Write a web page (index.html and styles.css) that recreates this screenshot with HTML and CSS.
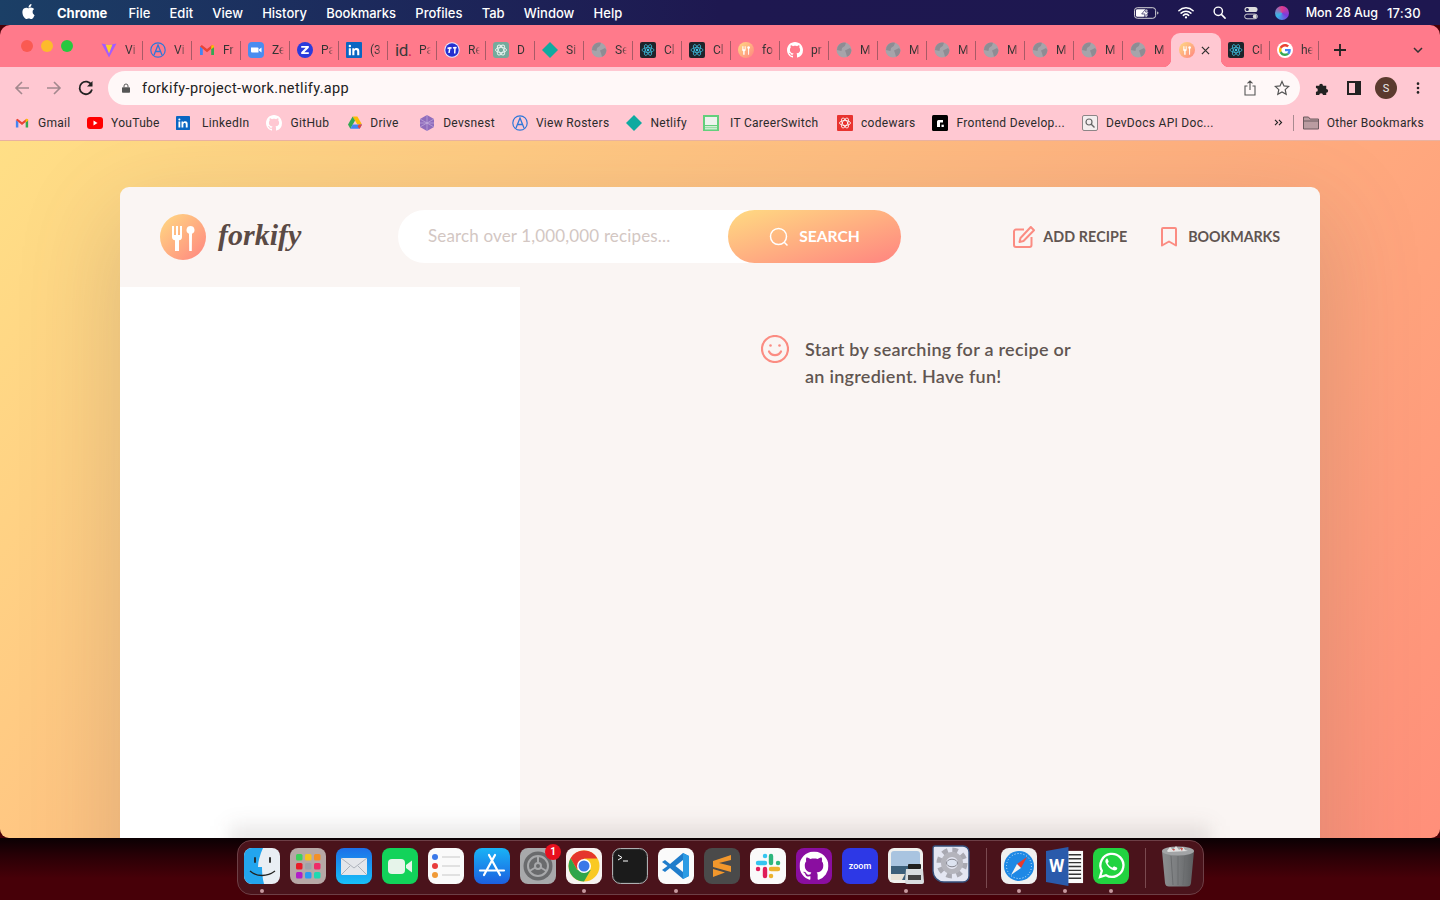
FILE: index.html
```html
<!DOCTYPE html>
<html lang="en">
<head>
    <meta charset="UTF-8">
    <meta name="viewport" content="width=device-width, initial-scale=1.0">
    <title>forkify</title>
    <link rel="stylesheet" href="styles.css">
</head>
<body>
    <!-- shared favicons -->
    <svg class="sprites" aria-hidden="true">
        <defs>
            <linearGradient id="brand" x1="0" y1="0" x2="1" y2="1">
                <stop offset="0" stop-color="#ffdb82"/>
                <stop offset="1" stop-color="#ff8480"/>
            </linearGradient>
        </defs>
        <symbol id="i-vite" viewBox="0 0 16 16">
            <path d="M0.500 1.500 8 3l7.500-1.500L8 15.500z" fill="#a45cff"/>
            <path d="M4.500 2.400 8 3l3.500-.6L8 11.500z" fill="#ffd028"/>
        </symbol>
        <symbol id="i-a" viewBox="0 0 16 16">
            <circle cx="8" cy="8" r="7.200" fill="none" stroke="#2f77d8" stroke-width="1.200"/>
            <path d="M4 13 8 3l4 10M5.600 9.500h4.800" fill="none" stroke="#2f77d8" stroke-width="1.300"/>
        </symbol>
        <symbol id="i-gmail" viewBox="0 0 16 16">
            <path d="M1 4.500V13h2.800V6.500z" fill="#4285f4"/>
            <path d="M15 4.500V13h-2.800V6.500z" fill="#34a853"/>
            <path d="M1 4.500 2.800 3 8 7l5.200-4L15 4.500 8 10.300z" fill="#ea4335"/>
            <path d="M12.200 3.800 13.500 3 15 3.800v1.500l-2.800 2z" fill="#fbbc05"/>
        </symbol>
        <symbol id="i-zoom" viewBox="0 0 16 16">
            <rect width="16" height="16" rx="4" fill="#4a8cf0"/>
            <path d="M3 5.500h6.500a1 1 0 0 1 1 1V10.500H4a1 1 0 0 1-1-1z" fill="#fff"/>
            <path d="m11 7.500 2.500-2v5l-2.500-2z" fill="#fff"/>
        </symbol>
        <symbol id="i-z" viewBox="0 0 16 16">
            <circle cx="8" cy="8" r="8" fill="#2b3bdc"/>
            <path d="M4.200 4h7.600v1.700L7.300 10.300h4.500V12H4.200v-1.700l4.500-4.600H4.200z" fill="#fff"/>
        </symbol>
        <symbol id="i-in" viewBox="0 0 16 16">
            <rect width="16" height="16" rx="1" fill="#0a66c2"/>
            <path d="M2.800 6.200h2.100v7H2.800zM3.850 2.800a1.200 1.200 0 1 1 0 2.400 1.200 1.200 0 0 1 0-2.400zM6.300 6.200h2v1c.4-.7 1.200-1.200 2.300-1.200 2 0 2.700 1.200 2.700 3.200v4h-2.100V9.700c0-1-.3-1.800-1.300-1.800s-1.500.8-1.500 1.800v3.500H6.300z" fill="#fff"/>
        </symbol>
        <symbol id="i-rt" viewBox="0 0 16 16">
            <circle cx="8" cy="8" r="7.700" fill="#e8ecff"/>
            <circle cx="8" cy="8" r="6.700" fill="#2430d0"/>
            <path d="M3.500 6.500c1.500-.8 3-.8 4.200-.4M5.800 6.200 5 11M9 6c1.200-.5 2.400-.6 3.600-.2M11 6l-.3 5.500" stroke="#fff" stroke-width="1.500" fill="none"/>
        </symbol>
        <symbol id="i-gpt" viewBox="0 0 16 16">
            <rect width="16" height="16" rx="3" fill="#74aa9c"/>
            <g fill="none" stroke="#e6f2ee" stroke-width="0.900">
                <ellipse cx="8" cy="8" rx="5.500" ry="2.600"/>
                <ellipse cx="8" cy="8" rx="5.500" ry="2.600" transform="rotate(60 8 8)"/>
                <ellipse cx="8" cy="8" rx="5.500" ry="2.600" transform="rotate(120 8 8)"/>
            </g>
        </symbol>
        <symbol id="i-netlify" viewBox="0 0 16 16">
            <path d="M8 0 16 8 8 16 0 8z" fill="#0faaa0"/>
        </symbol>
        <symbol id="i-globe" viewBox="0 0 16 16">
            <circle cx="8" cy="8" r="7.500" fill="#a6a4aa"/>
            <path d="M3 2.800A7.500 7.500 0 0 1 10 .8L8.800 4 6 6 5.500 9 1 8a7.500 7.500 0 0 1 2-5.200z" fill="#8e8c93"/>
            <path d="M9 8.500 14 6l1.400 2A7.500 7.500 0 0 1 11 14.800L10 11z" fill="#8e8c93"/>
        </symbol>
        <symbol id="i-react" viewBox="0 0 16 16">
            <rect width="16" height="16" rx="2" fill="#20232a"/>
            <g fill="none" stroke="#3fc7ea" stroke-width="0.700">
                <ellipse cx="8" cy="8" rx="6" ry="2.400"/>
                <ellipse cx="8" cy="8" rx="6" ry="2.400" transform="rotate(60 8 8)"/>
                <ellipse cx="8" cy="8" rx="6" ry="2.400" transform="rotate(120 8 8)"/>
            </g>
            <circle cx="8" cy="8" r="1.200" fill="#3fc7ea"/>
        </symbol>
        <symbol id="i-fork" viewBox="0 0 46 46">
            <circle cx="23" cy="23" r="23" fill="url(#brand)"/>
            <path d="M12 12h2v9h2v-9h2v9h2v-9h2v11c0 2-1 3-3 3.300V37h-4V26.300c-2-.3-3-1.300-3-3.300z" fill="#fff"/>
            <path d="M30.500 12a4 4 0 0 1 1.500 7.700L31.800 37h-2.600L29 19.700A4 4 0 0 1 30.500 12z" fill="#fff"/>
        </symbol>
        <symbol id="i-github" viewBox="0 0 16 16">
            <path fill="#fff" d="M8 0C3.580 0 0 3.580 0 8c0 3.540 2.290 6.530 5.470 7.590.4.070.55-.17.55-.38 0-.19-.01-.82-.01-1.490-2.010.37-2.530-.49-2.690-.94-.09-.23-.48-.94-.82-1.130-.28-.15-.68-.52-.01-.53.63-.01 1.080.58 1.230.82.72 1.210 1.870.87 2.330.66.070-.52.28-.87.51-1.070-1.780-.2-3.640-.89-3.640-3.950 0-.87.31-1.590.82-2.150-.08-.2-.36-1.020.08-2.120 0 0 .67-.21 2.200.82.64-.18 1.320-.27 2-.27.68 0 1.360.09 2 .27 1.530-1.040 2.200-.82 2.200-.82.44 1.100.16 1.920.08 2.120.51.56.82 1.270.82 2.150 0 3.070-1.870 3.750-3.650 3.950.29.25.54.73.54 1.480 0 1.070-.01 1.930-.01 2.200 0 .21.15.46.55.38A8.013 8.013 0 0 0 16 8c0-4.420-3.580-8-8-8z"/>
        </symbol>
        <symbol id="i-google" viewBox="0 0 56 56">
            <circle cx="28" cy="28" r="28" fill="#fff"/>
            <g transform="translate(7 7) scale(.875)">
                <path fill="#EA4335" d="M24 9.500c3.540 0 6.710 1.220 9.210 3.600l6.850-6.850C35.900 2.380 30.470 0 24 0 14.620 0 6.510 5.380 2.560 13.220l7.980 6.190C12.430 13.720 17.740 9.500 24 9.500z"/>
                <path fill="#4285F4" d="M46.980 24.550c0-1.570-.15-3.090-.38-4.550H24v9.020h12.940c-.58 2.960-2.260 5.480-4.780 7.180l7.730 6c4.510-4.180 7.090-10.360 7.090-17.650z"/>
                <path fill="#FBBC05" d="M10.530 28.590c-.48-1.450-.76-2.990-.76-4.590s.27-3.140.76-4.590l-7.980-6.190C.92 16.460 0 20.120 0 24c0 3.880.92 7.540 2.560 10.780l7.970-6.190z"/>
                <path fill="#34A853" d="M24 48c6.480 0 11.930-2.130 16.030-5.810l-7.730-6c-2.150 1.450-4.920 2.300-8.300 2.300-6.260 0-11.570-4.220-13.470-9.910l-7.980 6.190C6.510 42.620 14.620 48 24 48z"/>
            </g>
        </symbol>
    </svg>

    <header class="menubar">
        <div class="menu-left">
            <svg class="apple" viewBox="0 0 24 24"><path fill="#fff" d="M12.152 6.896c-.948 0-2.415-1.078-3.960-1.040-2.040.027-3.910 1.183-4.961 3.014-2.117 3.675-.546 9.103 1.519 12.090 1.013 1.454 2.208 3.090 3.792 3.039 1.520-.065 2.090-.987 3.935-.987 1.831 0 2.350.987 3.960.948 1.637-.026 2.676-1.480 3.676-2.948 1.156-1.688 1.636-3.325 1.662-3.415-.039-.013-3.182-1.221-3.220-4.857-.026-3.040 2.480-4.494 2.597-4.559-1.429-2.090-3.623-2.324-4.390-2.376-2-.156-3.675 1.090-4.610 1.090zM15.530 3.830c.843-1.012 1.400-2.427 1.245-3.830-1.207.052-2.662.805-3.532 1.818-.78.896-1.454 2.338-1.273 3.714 1.338.104 2.715-.688 3.559-1.701"/></svg>
            <span class="menu-app">Chrome</span>
            <span>File</span>
            <span>Edit</span>
            <span>View</span>
            <span>History</span>
            <span>Bookmarks</span>
            <span>Profiles</span>
            <span>Tab</span>
            <span>Window</span>
            <span>Help</span>
        </div>
        <div class="menu-right">
            <svg class="st-battery" viewBox="0 0 26 12"><rect x="0.500" y="0.500" width="22" height="11" rx="3" fill="none" stroke="#ddd"/><rect x="2" y="2" width="12" height="8" rx="1.500" fill="#fff"/><path d="M13 1 8 7h3.500l-1 4 5-6H12z" fill="#fff" stroke="#1e1a52" stroke-width="0.700"/><path d="M24 4.500c1 .3 1.500.8 1.500 1.500s-.5 1.200-1.500 1.500z" fill="#bbb"/></svg>
            <svg class="st-wifi" viewBox="0 0 18 14"><path d="M1 5a11.500 11.500 0 0 1 16 0M3.500 7.700a8 8 0 0 1 11 0M6 10.200a4.400 4.400 0 0 1 6 0" fill="none" stroke="#fff" stroke-width="1.700" stroke-linecap="round"/><circle cx="9" cy="12.500" r="1.300" fill="#fff"/></svg>
            <svg class="st-search" viewBox="0 0 14 14"><circle cx="5.700" cy="5.700" r="4.500" fill="none" stroke="#fff" stroke-width="1.500"/><path d="m9 9 4 4" stroke="#fff" stroke-width="1.700" stroke-linecap="round"/></svg>
            <svg class="st-control" viewBox="0 0 15 14"><rect x="0.500" y="0.500" width="14" height="5.500" rx="2.750" fill="#ddd"/><circle cx="3.500" cy="3.250" r="1.700" fill="#1e1a52"/><rect x="0.700" y="8.200" width="13.600" height="5" rx="2.500" fill="none" stroke="#ddd"/><circle cx="11.500" cy="10.700" r="2" fill="#ddd"/></svg>
            <span class="st-siri"></span>
            <span class="st-date">Mon 28 Aug</span>
            <span class="st-time">17:30</span>
        </div>
    </header>

    <div class="window">
        <div class="tabstrip">
            <div class="lights"><i class="red"></i><i class="yellow"></i><i class="green"></i></div>
            <div class="tab"><svg><use href="#i-vite"/></svg><span>Vi</span></div>
            <div class="tab"><svg><use href="#i-a"/></svg><span>Vi</span></div>
            <div class="tab"><svg><use href="#i-gmail"/></svg><span>Fr</span></div>
            <div class="tab"><svg><use href="#i-zoom"/></svg><span>Ze</span></div>
            <div class="tab"><svg><use href="#i-z"/></svg><span>Pa</span></div>
            <div class="tab"><svg><use href="#i-in"/></svg><span>(3</span></div>
            <div class="tab"><b class="tab-id">id<em>.</em></b><span>Pa</span></div>
            <div class="tab"><svg><use href="#i-rt"/></svg><span>Re</span></div>
            <div class="tab"><svg><use href="#i-gpt"/></svg><span>D</span></div>
            <div class="tab"><svg><use href="#i-netlify"/></svg><span>Si</span></div>
            <div class="tab"><svg><use href="#i-globe"/></svg><span>Se</span></div>
            <div class="tab"><svg><use href="#i-react"/></svg><span>Cl</span></div>
            <div class="tab"><svg><use href="#i-react"/></svg><span>Cl</span></div>
            <div class="tab"><svg><use href="#i-fork"/></svg><span>fo</span></div>
            <div class="tab"><svg><use href="#i-github"/></svg><span>pr</span></div>
            <div class="tab"><svg><use href="#i-globe"/></svg><span>M</span></div>
            <div class="tab"><svg><use href="#i-globe"/></svg><span>M</span></div>
            <div class="tab"><svg><use href="#i-globe"/></svg><span>M</span></div>
            <div class="tab"><svg><use href="#i-globe"/></svg><span>M</span></div>
            <div class="tab"><svg><use href="#i-globe"/></svg><span>M</span></div>
            <div class="tab"><svg><use href="#i-globe"/></svg><span>M</span></div>
            <div class="tab tab-before-active"><svg><use href="#i-globe"/></svg><span>M</span></div>
            <div class="tab tab-active"><svg><use href="#i-fork"/></svg><svg class="tab-close" viewBox="0 0 10 10"><path d="m1 1 8 8M9 1 1 9" stroke="#333" stroke-width="1.400"/></svg></div>
            <div class="tab"><svg><use href="#i-react"/></svg><span>Cl</span></div>
            <div class="tab"><svg><use href="#i-google"/></svg><span>he</span></div>
            <svg class="tab-new" viewBox="0 0 12 12"><path d="M6 0v12M0 6h12" stroke="#222" stroke-width="1.800"/></svg>
            <svg class="tab-list" viewBox="0 0 10 6"><path d="m1 1 4 4 4-4" fill="none" stroke="#333" stroke-width="1.500"/></svg>
        </div>

        <div class="toolbar">
            <svg class="tool" viewBox="0 0 16 16"><path d="M15 8H2M8 2 2 8l6 6" fill="none" stroke="#a3888e" stroke-width="1.600"/></svg>
            <svg class="tool" viewBox="0 0 16 16"><path d="M1 8h13M8 2l6 6-6 6" fill="none" stroke="#a3888e" stroke-width="1.600"/></svg>
            <svg class="tool" viewBox="0 0 16 16"><path d="M13.500 5A6.300 6.300 0 1 0 14 9.500" fill="none" stroke="#222" stroke-width="1.800"/><path d="M14.500 1v5.500H9z" fill="#222"/></svg>
            <div class="omnibox">
                <svg class="lock" viewBox="0 0 10 12"><path d="M2.500 5V3.500a2.500 2.500 0 0 1 5 0V5" fill="none" stroke="#555" stroke-width="1.200"/><rect y="5" width="10" height="7" rx="1" fill="#555"/></svg>
                <span class="url">forkify-project-work.netlify.app</span>
                <svg class="omni-share" viewBox="0 0 12 16"><path d="M3.500 6H1v9h10V6H8.500M6 10V1M3.500 3.300 6 1l2.500 2.300" fill="none" stroke="#555" stroke-width="1.100"/></svg>
                <svg class="omni-star" viewBox="0 0 16 16"><path d="m8 1.500 2 4.400 4.700.5-3.500 3.200 1 4.700L8 11.900l-4.200 2.400 1-4.700L1.300 6.400 6 5.900z" fill="none" stroke="#555" stroke-width="1.200"/></svg>
            </div>
            <svg class="tool-puzzle" viewBox="0 0 16 16"><path d="M1 5h3.500a2 2 0 1 1 4 0H12v3.500a2 2 0 1 1 0 4V15H8.500a2 2 0 1 0-4 0H1v-3.500a2 2 0 1 0 0-4z" fill="#222"/></svg>
            <svg class="tool-panel" viewBox="0 0 14 14"><rect x="1" y="1" width="12" height="12" fill="none" stroke="#222" stroke-width="2"/><rect x="8" y="1" width="5" height="12" fill="#222"/></svg>
            <span class="avatar">S</span>
            <svg class="tool-more" viewBox="0 0 4 16"><circle cx="2" cy="3" r="1.500" fill="#222"/><circle cx="2" cy="8" r="1.500" fill="#222"/><circle cx="2" cy="13" r="1.500" fill="#222"/></svg>
        </div>

        <nav class="bookmarks">
            <a class="bm bm-gmail"><svg><use href="#i-gmail"/></svg>Gmail</a>
            <a class="bm bm-yt"><svg viewBox="0 0 16 12"><rect width="16" height="12" rx="3" fill="#f00"/><path d="m6.500 3.500 4 2.500-4 2.500z" fill="#fff"/></svg>YouTube</a>
            <a class="bm bm-in"><svg><use href="#i-in"/></svg>LinkedIn</a>
            <a class="bm bm-gh"><svg><use href="#i-github"/></svg>GitHub</a>
            <a class="bm bm-drive"><svg viewBox="0 0 16 14"><path d="M5.300 0h5.400l5.300 9.300h-5.300z" fill="#fbbc05"/><path d="M5.300 0 0 9.300 2.700 14l5.300-9.300z" fill="#34a853"/><path d="M2.700 14h10.600L16 9.300H5.300z" fill="#4285f4"/><path d="m13.300 14 2.700-4.700h-3.500l-1.500 2.500z" fill="#ea4335"/></svg>Drive</a>
            <a class="bm bm-dev"><svg viewBox="0 0 14 16"><path d="m7 0 7 4v8l-7 4-7-4V4z" fill="#8f6cbc"/><path d="M7 0v16M0 4l7 4 7-4M0 8h14M0 12l7-4 7 4" stroke="#c9b5e0" stroke-width="0.600" fill="none"/></svg>Devsnest</a>
            <a class="bm bm-rost"><svg><use href="#i-a"/></svg>View Rosters</a>
            <a class="bm bm-net"><svg><use href="#i-netlify"/></svg>Netlify</a>
            <a class="bm bm-it"><svg viewBox="0 0 16 16"><rect width="16" height="16" fill="#63cf7c"/><rect x="2" y="2" width="12" height="8" fill="#eef3ee"/><rect x="2" y="11" width="12" height="1.500" fill="#d6eed8"/><rect x="2" y="13.200" width="12" height="1.200" fill="#e6f6e8"/></svg>IT CareerSwitch</a>
            <a class="bm bm-cw"><svg viewBox="0 0 16 16"><rect width="16" height="16" rx="1" fill="#e8332f"/><g fill="none" stroke="#fff" stroke-width="0.800"><ellipse cx="8" cy="8" rx="5.500" ry="2.500"/><ellipse cx="8" cy="8" rx="5.500" ry="2.500" transform="rotate(60 8 8)"/><ellipse cx="8" cy="8" rx="5.500" ry="2.500" transform="rotate(120 8 8)"/></g></svg>codewars</a>
            <a class="bm bm-fe"><svg viewBox="0 0 16 16"><rect width="16" height="16" rx="1.500" fill="#000"/><path d="M5 12V6.500A1.500 1.500 0 0 1 6.500 5H11v2.500H8V12z" fill="#fff"/><rect x="9.500" y="9.700" width="2.300" height="2.300" fill="#fff"/></svg>Frontend Develop...</a>
            <a class="bm bm-docs"><svg viewBox="0 0 16 16"><rect x="0.500" y="0.500" width="15" height="15" rx="1.500" fill="#f4eeee" stroke="#8d8587"/><circle cx="7" cy="7" r="3" fill="none" stroke="#666" stroke-width="1.200"/><path d="m9 9 3.500 3.500" stroke="#666" stroke-width="1.400"/></svg>DevDocs API Doc...</a>
            <svg class="bm-more" viewBox="0 0 10 8"><path d="m1 1 3 3-3 3M5.500 1l3 3-3 3" fill="none" stroke="#222" stroke-width="1.300"/></svg>
            <span class="bm-sep"></span>
            <a class="bm bm-other"><svg viewBox="0 0 16 13"><path d="M.5 12.500V.5h5l1.500 2h8.500v10z" fill="#bb9ca1" stroke="#6d5a5e"/><path d="M.5 4.500h15" stroke="#6d5a5e"/></svg>Other Bookmarks</a>
        </nav>

        <main class="page">
            <div class="container">
                <div class="header">
                    <div class="logo">
                        <svg><use href="#i-fork"/></svg>
                        <span>forkify</span>
                    </div>
                    <form class="search">
                        <input class="search-field" type="text" placeholder="Search over 1,000,000 recipes...">
                        <button class="btn" type="button">
                            <svg viewBox="0 0 20 20"><circle cx="9.500" cy="9.500" r="8" fill="none" stroke="#fff" stroke-width="1.500"/><path d="m15 15 3.500 3.500" stroke="#fff" stroke-width="1.500"/></svg>
                            <span>Search</span>
                        </button>
                    </form>
                    <div class="nav">
                        <a class="nav-btn nav-add">
                            <svg viewBox="0 0 22 22"><path d="M11 3.500H3a2 2 0 0 0-2 2V19a2 2 0 0 0 2 2h13.500a2 2 0 0 0 2-2v-8" fill="none" stroke="#fb8c82" stroke-width="2"/><path d="M17.800 1 21 4.200 10.500 15l-4 1 1-4z" fill="none" stroke="#fb8c82" stroke-width="2" stroke-linejoin="round"/></svg>
                            <span>Add recipe</span>
                        </a>
                        <a class="nav-btn nav-marks">
                            <svg viewBox="0 0 16 20"><path d="M2 1h12a1 1 0 0 1 1 1v16.500l-7-4-7 4V2a1 1 0 0 1 1-1z" fill="none" stroke="#fb8c82" stroke-width="2" stroke-linejoin="round"/></svg>
                            <span>Bookmarks</span>
                        </a>
                    </div>
                </div>
                <div class="results"></div>
                <div class="recipe">
                    <div class="message">
                        <svg viewBox="0 0 28 28"><circle cx="14" cy="14" r="13" fill="none" stroke="#fb8c82" stroke-width="2.200"/><circle cx="9.500" cy="10.500" r="1.300" fill="#fb8c82"/><circle cx="18.500" cy="10.500" r="1.300" fill="#fb8c82"/><path d="M8 16.500c1.200 2.400 3.300 3.600 6 3.600s4.800-1.200 6-3.600" fill="none" stroke="#fb8c82" stroke-width="2.200" stroke-linecap="round"/></svg>
                        <p>Start by searching for a recipe or an ingredient. Have fun!</p>
                    </div>
                </div>
            </div>
            <div class="dock-glow"></div>
        </main>
    </div>

    <footer class="dock-area">
        <div class="dock">
            <div class="app"><svg viewBox="0 0 36 36"><rect width="36" height="36" rx="8" fill="#e9eef4"/><path d="M8 0h11c-3 7-5 13-5 19h4c0 6 .5 11 2 17H8a8 8 0 0 1-8-8V8a8 8 0 0 1 8-8z" fill="#23a5ee"/><path d="M11 10v4M26 10v4" stroke="#222" stroke-width="1.800" stroke-linecap="round"/><path d="M6 23c7 6 17 6 25 0" fill="none" stroke="#222" stroke-width="1.300"/></svg><i class="dot"></i></div>
            <div class="app"><svg viewBox="0 0 36 36"><rect width="36" height="36" rx="8" fill="#b7a8a6"/><g><rect x="6" y="6" width="6.500" height="6.500" rx="1.500" fill="#3ed15c"/><rect x="15" y="6" width="6.500" height="6.500" rx="1.500" fill="#f6c420"/><rect x="24" y="6" width="6.500" height="6.500" rx="1.500" fill="#f39028"/><rect x="6" y="15" width="6.500" height="6.500" rx="1.500" fill="#e81c28"/><rect x="15" y="15" width="6.500" height="6.500" rx="1.500" fill="#9ea3a8"/><rect x="24" y="15" width="6.500" height="6.500" rx="1.500" fill="#ee2a68"/><rect x="6" y="24" width="6.500" height="6.500" rx="1.500" fill="#b01fc8"/><rect x="15" y="24" width="6.500" height="6.500" rx="1.500" fill="#2a9df0"/><rect x="24" y="24" width="6.500" height="6.500" rx="1.500" fill="#1ed8b0"/></g></svg></div>
            <div class="app"><svg viewBox="0 0 36 36"><defs><linearGradient id="mail" x1="0" y1="0" x2="0" y2="1"><stop offset="0" stop-color="#1d6fe8"/><stop offset="1" stop-color="#17c0f8"/></linearGradient></defs><rect width="36" height="36" rx="8" fill="url(#mail)"/><rect x="5" y="10" width="26" height="17" rx="1" fill="#e4e6ea"/><path d="m5 10 13 10 13-10M5 27l9-9M31 27l-9-9" fill="none" stroke="#a7adb6" stroke-width="0.900"/></svg></div>
            <div class="app"><svg viewBox="0 0 36 36"><rect width="36" height="36" rx="8" fill="#12d35a"/><rect x="6" y="11" width="17" height="15" rx="4" fill="#e6f4ea"/><path d="m24 17 6-4.500v12L24 20z" fill="#e6f4ea"/></svg></div>
            <div class="app"><svg viewBox="0 0 36 36"><rect width="36" height="36" rx="8" fill="#fafafa"/><circle cx="7" cy="9" r="3" fill="#3a78e8"/><circle cx="7" cy="18" r="3" fill="#e83c3c"/><circle cx="7" cy="27" r="3" fill="#f09a38"/><path d="M14 9h18M14 18h18M14 27h18" stroke="#c8c8c8" stroke-width="1.200"/></svg></div>
            <div class="app"><svg viewBox="0 0 36 36"><defs><linearGradient id="store" x1="0" y1="0" x2="0" y2="1"><stop offset="0" stop-color="#19b3f6"/><stop offset="1" stop-color="#1c5fe0"/></linearGradient></defs><rect width="36" height="36" rx="8" fill="url(#store)"/><path d="M15 7l11 20M21 7 10 27M6 22.500h24" fill="none" stroke="#fff" stroke-width="2.200" stroke-linecap="round"/></svg></div>
            <div class="app"><svg viewBox="0 0 36 36"><rect width="36" height="36" rx="8" fill="#a8a9ab"/><circle cx="18" cy="18" r="14.500" fill="#6a6b6d"/><circle cx="18" cy="18" r="10" fill="none" stroke="#a8a9ab" stroke-width="2"/><circle cx="18" cy="18" r="3" fill="none" stroke="#a8a9ab" stroke-width="2"/><path d="M18 15V8M15.400 19.500 9.500 23M20.600 19.500l5.900 3.500" stroke="#a8a9ab" stroke-width="2"/></svg><b class="badge">1</b></div>
            <div class="app"><svg viewBox="0 0 36 36"><rect width="36" height="36" rx="8" fill="#f7f3f1"/><circle cx="18" cy="18" r="15.500" fill="#f9c922"/><path d="M18 2.500A15.500 15.500 0 0 0 4.600 10.300l6.600 11.400L18 10.500h13.400A15.500 15.500 0 0 0 18 2.500z" fill="#e5352c"/><path d="M4.600 10.300A15.500 15.500 0 0 0 18 33.500l6.700-11.500h-13.500z" fill="#2fa54a"/><circle cx="18" cy="18" r="7" fill="#fff"/><circle cx="18" cy="18" r="5.500" fill="#3a78e8"/></svg><i class="dot"></i></div>
            <div class="app"><svg viewBox="0 0 36 36"><rect x="0.500" y="0.500" width="35" height="35" rx="8" fill="#2c2c2c" stroke="#aeb0b2"/><rect x="2" y="2" width="32" height="32" rx="6" fill="#1b1b1b"/><path d="m6 7 4 2.500L6 12" fill="none" stroke="#fff" stroke-width="1"/><path d="M11 13h5" stroke="#fff" stroke-width="1"/></svg></div>
            <div class="app"><svg viewBox="0 0 36 36"><rect width="36" height="36" rx="8" fill="#fafafa"/><path d="M25 5 31 8v20l-6 3-13-11-5 4-3-2 5.500-4L4 14l3-2 5 4z" fill="#1f7ccb"/><path d="M25 5 31 8v20l-6 3z" fill="#2b9be4"/><path d="M25 12v12l-7.500-6z" fill="#fafafa"/></svg><i class="dot"></i></div>
            <div class="app"><svg viewBox="0 0 36 36"><rect width="36" height="36" rx="8" fill="#4a4a4a"/><path d="M27 7 9 13v6l18 5v-6L15 15l12-3zM9 21l12 3.500L9 29z" fill="#f2972c"/></svg></div>
            <div class="app"><svg viewBox="0 0 36 36"><rect width="36" height="36" rx="8" fill="#fafafa"/><g stroke-width="4.400" stroke-linecap="round"><path d="M8 15h7M15 8h.1" stroke="#36c5f0"/><path d="M21 8v7M28 15h.1" stroke="#2eb67d"/><path d="M21 21h7M21 28h.1" stroke="#ecb22e"/><path d="M15 21v7M8 21h.1" stroke="#e01e5a"/></g></svg></div>
            <div class="app"><svg viewBox="0 0 36 36"><rect width="36" height="36" rx="8" fill="#8a0ea0"/><use href="#i-github" x="3.500" y="3.500" width="29" height="29"/></svg></div>
            <div class="app"><svg viewBox="0 0 36 36"><rect width="36" height="36" rx="8" fill="#2d38e6"/><text x="18" y="20.500" text-anchor="middle" class="zoom-word">zoom</text></svg></div>
            <div class="app"><svg viewBox="0 0 36 36"><rect width="35" height="35" rx="6" fill="#f0f0ee"/><rect x="3" y="3" width="29" height="29" rx="3" fill="#a9c4e0"/><rect x="3" y="18" width="29" height="14" fill="#3c5f7a"/><path d="M3 26h14l-3 6H3z" fill="#e8e2d8"/><rect x="20" y="16" width="13" height="5" rx="1" fill="#1f1f1f"/><path d="M18 21h17l1 13a2 2 0 0 1-2 2H19a2 2 0 0 1-2-2z" fill="#d8dde0"/><path d="M20 27h13v5H20z" fill="#444"/></svg><i class="dot"></i></div>
            <div class="app app-prefs"><svg viewBox="0 0 40 40"><path d="M3 1h28a6 6 0 0 1 6 6v24a6 6 0 0 1-6 6H12C6 37 1 32 1 26V3a2 2 0 0 1 2-2z" fill="#e4e6f2" stroke="#35507c" stroke-width="1.400"/><circle cx="20" cy="18" r="13" fill="none" stroke="#a9a9b2" stroke-width="5" stroke-dasharray="5.500 4.700"/><circle cx="20" cy="18" r="8.500" fill="none" stroke="#b4b4bc" stroke-width="5"/><ellipse cx="20" cy="18" rx="5.500" ry="3.800" fill="#dde3f0" stroke="#85858e"/></svg></div>
            <span class="dock-sep"></span>
            <div class="app"><svg viewBox="0 0 36 36"><rect width="36" height="36" rx="8" fill="#f0f0f0"/><circle cx="18" cy="18" r="15" fill="#1e88e5"/><circle cx="18" cy="18" r="12.500" fill="none" stroke="#d6eafa" stroke-width="1" stroke-dasharray="1 2"/><path d="M26 9 16 16l4 4z" fill="#e8392c"/><path d="M10 27l6-11 4 4z" fill="#f4f4f4"/></svg><i class="dot"></i></div>
            <div class="app app-word"><svg viewBox="0 0 40 40"><rect x="20" y="4" width="18" height="33" fill="#fafafa"/><path d="M23 8h13M23 12h13M23 16h13M23 20h13M23 24h13M23 28h13M23 32h13" stroke="#333" stroke-width="1.400"/><path d="M0 4 23 0v40L0 36z" fill="#2a5aab"/><text x="11" y="26" text-anchor="middle" class="word-w">W</text></svg><i class="dot"></i></div>
            <div class="app"><svg viewBox="0 0 36 36"><rect width="36" height="36" rx="8" fill="#22d340"/><path d="M7 29l1.800-6.200A11.500 11.500 0 1 1 13 27.200z" fill="none" stroke="#fff" stroke-width="2.300"/><path d="M13.500 11c-1 .6-1.500 2-.8 3.800 1.500 3.700 4.500 6.500 8 7.500 1.700.4 3-.3 3.500-1.500.2-.6.100-1-.3-1.200l-2.500-1.200c-.4-.2-.7 0-1 .4l-.8 1c-2.200-.8-4-2.500-5-4.600l.8-.9c.3-.3.300-.7.200-1l-1-2.400c-.3-.6-.6-.6-1.100-.4z" fill="#fff"/></svg><i class="dot"></i></div>
            <span class="dock-sep"></span>
            <div class="app app-trash"><svg viewBox="0 0 36 42"><defs><linearGradient id="bin" x1="0" y1="0" x2="1" y2="0"><stop offset="0" stop-color="#8c8e90"/><stop offset=".5" stop-color="#7a7c7e"/><stop offset="1" stop-color="#5c5e60"/></linearGradient></defs><path d="M2 6h32l-3 32a4 4 0 0 1-4 3.500H9A4 4 0 0 1 5 38z" fill="url(#bin)"/><path d="M11 11l2 29M18 11v29M25 11l-2 29" stroke="#6a6c6e" stroke-width="1"/><ellipse cx="18" cy="6" rx="16" ry="4.500" fill="#a2a4a6"/><path d="M7 6l3-4 3 3 3-4 3 4 4-3 2 3 3 1-20 1z" fill="#e2e2e2"/><path d="M12 4h3l-1 2zM20 3h3l-1 3z" fill="#c8544e"/></svg></div>
        </div>
    </footer>
</body>
</html>
```

FILE: styles.css
```css
* {
    box-sizing: border-box;
}
html, body {
    height: 100%;
    margin: 0;
    overflow: hidden;
}
body {
    display: flex;
    flex-direction: column;
    background: #470008;
    font-family: Roboto, Arial, sans-serif;
}
.sprites {
    position: absolute;
    width: 0;
    height: 0;
}

/* mac menu bar */
.menubar {
    height: 25px;
    flex: none;
    display: flex;
    justify-content: space-between;
    align-items: center;
    padding: 0 18px 0 21px;
    background: linear-gradient(90deg, #1b3f66 0%, #1c2a5c 25%, #1e1850 50%, #1e1750 100%);
    color: #fff;
    font-family: Inter, Arial, sans-serif;
    font-size: 13px;
    font-weight: 500;
}
.menu-left {
    display: flex;
    align-items: center;
    gap: 19.2px;
}
.apple {
    width: 15px;
    height: 15px;
    margin: -3px 1.8px 0 0;
}
.menu-app {
    font-weight: 700;
    margin-right: 2px;
}
.menu-right {
    display: flex;
    align-items: center;
}
.st-battery { width: 25px; height: 12px; margin-right: 19px; }
.st-wifi { width: 16px; height: 13px; margin-right: 19px; }
.st-search { width: 13px; height: 13px; margin-right: 18px; }
.st-control { width: 14px; height: 14px; margin-right: 17px; }
.st-siri {
    width: 14px;
    height: 14px;
    border-radius: 50%;
    margin-right: 17px;
    background: conic-gradient(#e23a8c, #7a3be0, #36b8e8, #e23a8c);
}
.st-date {
    margin-right: 9px;
    font-size: 12.5px;
    letter-spacing: -0.05px;
}
.st-time {
    width: 35px;
    font-size: 13px;
    letter-spacing: 0.2px;
}

/* browser window */
.window {
    flex: 1;
    min-height: 0;
    display: flex;
    flex-direction: column;
    overflow: hidden;
    border-radius: 10px 10px 9px 9px;
}
.tabstrip {
    height: 42px;
    flex: none;
    display: flex;
    align-items: flex-end;
    background: #ff7a8b;
}
.lights {
    width: 94px;
    flex: none;
    align-self: flex-start;
    display: flex;
    gap: 8px;
    padding: 15px 0 0 21px;
}
.lights i {
    width: 12px;
    height: 12px;
    border-radius: 50%;
}
.red { background: #fa5a52; }
.yellow { background: #fdbb2c; }
.green { background: #27c83f; }
.tab {
    width: 49px;
    height: 34px;
    flex: none;
    display: flex;
    align-items: center;
    gap: 8px;
    padding: 0 0 0 7px;
    font-size: 12px;
    position: relative;
}
/* thin divider between tabs */
.tab::after {
    content: "";
    position: absolute;
    right: 0;
    top: 8px;
    width: 1px;
    height: 19px;
    background: #a85a66;
}
.tab svg {
    width: 16px;
    height: 16px;
    flex: none;
}
/* title fades out at the end of a squeezed tab */
.tab span {
    width: 12px;
    white-space: nowrap;
    color: transparent;
    background: linear-gradient(90deg, #333 60%, transparent);
    -webkit-background-clip: text;
    background-clip: text;
}
.tab-id {
    width: 16px;
    flex: none;
    font-size: 17px;
    font-weight: 400;
    letter-spacing: -0.5px;
    color: #3a3a3a;
}
.tab-id em {
    color: #e0204c;
    font-style: normal;
}
.tab-before-active::after {
    display: none;
}
.tab-active {
    width: 50px;
    margin-left: -1px;
    padding-left: 8px;
    background: #ffc8d2;
    border-radius: 9px 9px 0 0;
}
/* flared bottom corners of the open tab */
.tab-active::before,
.tab-active::after {
    content: "";
    position: absolute;
    top: auto;
    bottom: 0;
    width: 8px;
    height: 8px;
}
.tab-active::before {
    left: -8px;
    background: radial-gradient(circle at 0 0, transparent 8px, #ffc8d2 8.5px);
}
.tab-active::after {
    right: -8px;
    background: radial-gradient(circle at 100% 0, transparent 8px, #ffc8d2 8.5px);
}
.tab .tab-close {
    width: 9px;
    height: 9px;
    margin-left: -2px;
}
.tab-new {
    width: 12px;
    height: 12px;
    margin: 0 0 11px 15px;
}
.tab-list {
    width: 10px;
    height: 6px;
    margin: 0 0 14px 67px;
}
.toolbar {
    height: 38px;
    flex: none;
    display: flex;
    align-items: center;
    padding: 4px 15px 0 14px;
    background: #ffc8d2;
}
.tool {
    width: 16px;
    height: 16px;
    margin-right: 16px;
}
.omnibox {
    width: 1192px;
    height: 34px;
    margin-left: -2px;
    display: flex;
    align-items: center;
    padding: 0 10px 0 14px;
    border-radius: 17px;
    background: #fff8f8;
}
.lock {
    width: 8px;
    height: 10px;
    flex: none;
}
.url {
    flex: 1;
    margin-left: 12px;
    font-size: 14.5px;
    letter-spacing: 0.36px;
    color: #222;
}
.omni-share {
    width: 12px;
    height: 16px;
    margin-right: 18px;
}
.omni-star {
    width: 16px;
    height: 16px;
}
.tool-puzzle {
    width: 15px;
    height: 15px;
    margin-left: 15px;
}
.tool-panel {
    width: 14px;
    height: 14px;
    margin-left: 17px;
}
.avatar {
    width: 22px;
    height: 22px;
    margin-left: 14px;
    border-radius: 50%;
    background: #5b3a2e;
    color: #eee;
    font-size: 11px;
    display: flex;
    align-items: center;
    justify-content: center;
}
.tool-more {
    width: 4px;
    height: 14px;
    margin-left: 19px;
}
.bookmarks {
    height: 36px;
    flex: none;
    display: flex;
    align-items: center;
    padding: 0 0 0 15px;
    background: #ffc8d2;
    border-bottom: 1px solid #e9b1a0;
    font-size: 12px;
    letter-spacing: 0.3px;
    color: #2b2b2b;
}
.bm {
    display: flex;
    align-items: center;
    gap: 8px;
    white-space: nowrap;
}
.bm svg {
    width: 16px;
    height: 16px;
    flex: none;
}
.bm-gmail { gap: 9px; margin-right: 16.5px; }
.bm-gmail svg { width: 14px; }
.bm-yt { margin-right: 16.3px; }
.bm-yt svg { height: 12px; }
.bm-in { gap: 12px; margin-right: 17px; }
.bm-in svg { width: 14px; height: 14px; }
.bm-gh { margin-right: 19px; }
.bm-drive { gap: 8px; margin-right: 21.5px; }
.bm-drive svg { width: 14px; height: 13px; }
.bm-dev { gap: 9px; margin-right: 17px; }
.bm-dev svg { width: 14px; }
.bm-rost { margin-right: 17px; }
.bm-net { margin-right: 16px; }
.bm-it { gap: 11px; margin-right: 18.5px; }
.bm-cw { margin-right: 17px; }
.bm-fe { margin-right: 17px; }
.bm-more {
    width: 9px;
    height: 7px;
    margin-left: 60px;
}
.bm-sep {
    width: 1px;
    height: 16px;
    margin: 0 9px 0 10px;
    background: #a88a90;
}

/* forkify app */
.page {
    flex: 1;
    min-height: 0;
    padding: 46px 120px 0;
    background: linear-gradient(131deg, #ffdf86, #ff8f7a);
    position: relative;
    overflow: hidden;
}
.container {
    height: 800px;
    display: grid;
    grid-template-columns: 400px 1fr;
    grid-template-rows: 100px 1fr;
    border-radius: 9px;
    overflow: hidden;
    background: #faf5f3;
    box-shadow: 0 32px 96px 8px rgba(97, 85, 81, 0.2);
    font-family: Lato, "Open Sans", Arial, sans-serif;
    color: #615551;
}
.header {
    grid-column: 1 / -1;
    display: flex;
    align-items: center;
    padding: 0 40px 1px;
}
.logo {
    width: 238px;
    flex: none;
    display: flex;
    align-items: center;
    gap: 12px;
    margin-top: 1px;
}
.logo svg {
    width: 46px;
    height: 46px;
}
.logo span {
    font-family: "Liberation Serif", serif;
    font-style: italic;
    font-weight: 700;
    font-size: 30px;
    color: #5a4a45;
    margin-top: -4px;
}
.search {
    width: 503px;
    height: 53px;
    display: flex;
    border-radius: 27px;
    background: #fff;
}
.search-field {
    flex: 1;
    min-width: 0;
    border: 0;
    outline: 0;
    padding: 0 0 2px 30px;
    background: none;
    font-family: inherit;
    font-size: 17px;
    letter-spacing: 0.15px;
}
.search-field::placeholder {
    color: #d3c7c3;
}
.btn {
    width: 173px;
    height: 53px;
    display: flex;
    align-items: center;
    justify-content: center;
    gap: 10px;
    padding: 0 0 2px;
    border: 0;
    border-radius: 27px;
    background: linear-gradient(to right bottom, #ffdb82, #ff8480);
    color: #fff;
    font-family: inherit;
    font-size: 15.6px;
    font-weight: 700;
    text-transform: uppercase;
}
.btn svg {
    width: 20px;
    height: 20px;
    margin-top: 2px;
}
.nav {
    flex: 1;
    display: flex;
    justify-content: flex-end;
    gap: 34px;
}
.nav-btn {
    display: flex;
    align-items: center;
    gap: 8px;
    font-size: 14.3px;
    font-weight: 700;
    text-transform: uppercase;
}
.nav-add span {
    letter-spacing: 0.1px;
}
.nav-add svg {
    width: 22px;
    height: 22px;
}
.nav-marks {
    gap: 11px;
}
.nav-marks span {
    letter-spacing: -0.1px;
}
.nav-marks svg {
    width: 16px;
    height: 20px;
}
.results {
    background: #fff;
}
.message {
    width: 400px;
    margin: 0 auto;
    padding: 48px 40px 0 41px;
    display: flex;
    gap: 16px;
    align-items: flex-start;
}
.message svg {
    width: 28px;
    height: 28px;
    flex: none;
}
.message p {
    margin: 1px 0 0;
    font-size: 18px;
    font-weight: 600;
    letter-spacing: 0.27px;
    line-height: 27px;
}
.dock-glow {
    position: absolute;
    left: 230px;
    right: 230px;
    bottom: -12px;
    height: 24px;
    background: rgba(60, 40, 40, 0.12);
    filter: blur(10px);
}

/* mac dock */
.dock-area {
    height: 62px;
    flex: none;
    display: flex;
    justify-content: center;
    padding-top: 2px;
    background: linear-gradient(180deg, #0a0003 0%, #2a0006 30%, #470008 65%);
}
.dock {
    width: 967px;
    height: 55px;
    margin-left: 1px;
    display: flex;
    align-items: flex-start;
    gap: 10px;
    padding: 7px 0 0 6px;
    border: 1px solid #6d3f46;
    border-radius: 14px;
    background: #4a131b;
}
.app {
    width: 36px;
    height: 36px;
    flex: none;
    position: relative;
}
.app svg {
    display: block;
    width: 36px;
    height: 36px;
}
.app-prefs svg {
    width: 40px;
    height: 40px;
    margin: -3px 0 0 -2px;
}
.app-word svg {
    width: 39px;
    height: 39px;
    margin: -1px 0 0 -1px;
}
.app-trash svg {
    height: 42px;
    margin-top: -3px;
}
.dot {
    position: absolute;
    left: 16px;
    top: 41px;
    width: 4px;
    height: 4px;
    border-radius: 50%;
    background: #c79aa0;
}
.badge {
    position: absolute;
    right: -5px;
    top: -4px;
    width: 16px;
    height: 16px;
    border-radius: 50%;
    background: #e8101e;
    color: #fff;
    font-family: Roboto, Arial, sans-serif;
    font-size: 10px;
    text-align: center;
    line-height: 16px;
}
.dock-sep {
    width: 1px;
    height: 40px;
    flex: none;
    margin: 0 4px 0 6px;
    background: #7a4a50;
}
.zoom-word {
    font-family: Roboto, Arial, sans-serif;
    font-size: 9px;
    font-weight: 500;
    fill: #fff;
}
.word-w {
    font-family: Roboto, Arial, sans-serif;
    font-size: 18px;
    font-weight: 700;
    fill: #fff;
}
```
